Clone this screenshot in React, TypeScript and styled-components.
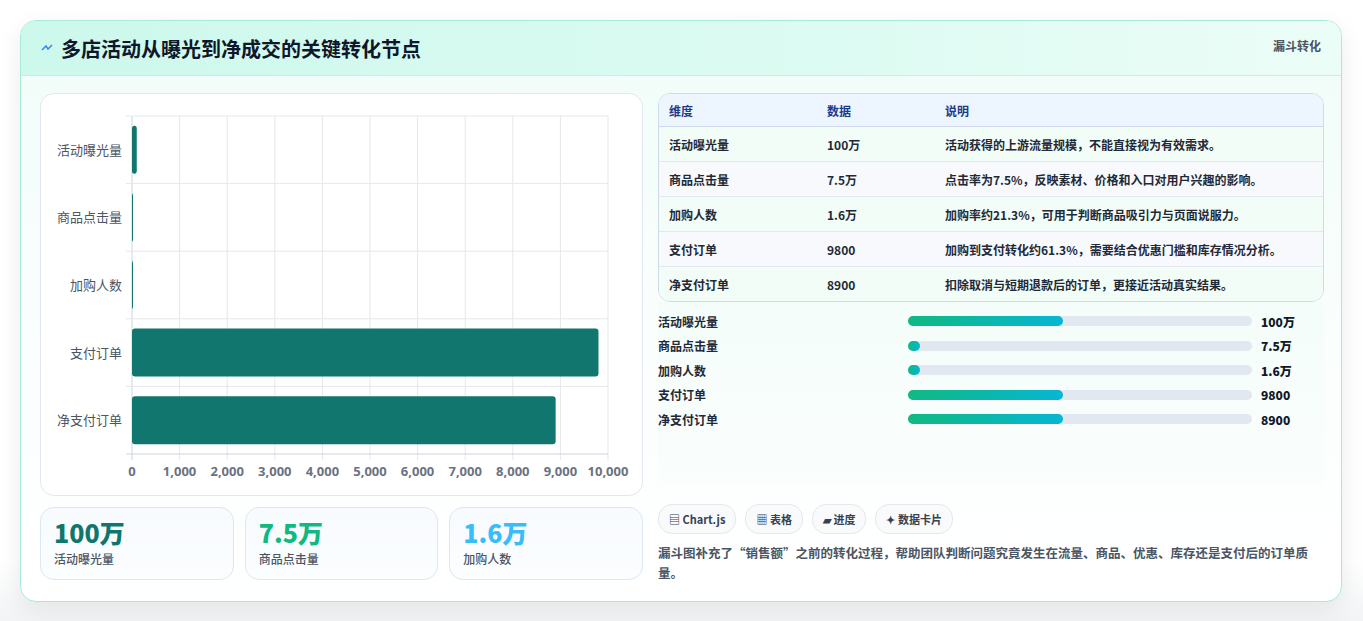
import React from "react";
import styled, { createGlobalStyle } from "styled-components";

const Global = createGlobalStyle`
  html, body { margin: 0; padding: 0; background: #fff; }
  body { font-family: "Noto Sans CJK SC", "Noto Sans", sans-serif; color: #1f2937; }
`;

const Page = styled.div`
  padding: 20px 21px 22px 20px;
  background: linear-gradient(180deg, #fff 0%, #fff 90%, #f1f3f4 100%);
`;
const Card = styled.div`
  border: 1px solid #a7eadc;
  border-radius: 16px;
  overflow: hidden;
  background: linear-gradient(180deg, #f0fdf8 0%, #fbfefd 60%, #fff 100%);
  box-shadow: 0 8px 24px rgba(15, 23, 42, 0.08);
`;
const Header = styled.div`
  height: 54px;
  display: flex;
  justify-content: space-between;
  padding: 0 20px;
  background: linear-gradient(90deg, #cdf8ec 0%, #dcfbf2 60%, #ecfdf7 100%);
  border-bottom: 1px solid #c9efe4;
`;
const Title = styled.h1`
  margin: 0;
  display: flex;
  align-items: center;
  gap: 8px;
  font-size: 20px;
  font-weight: 700;
  color: #0f172a;
`;
const Badge = styled.span`
  font-size: 12px;
  font-weight: 700;
  color: #4b5563;
  margin-top: 16px;
`;
const Body = styled.div`
  display: grid;
  grid-template-columns: 603px 666px;
  gap: 15px;
  padding: 17px 19px 18px 19px;
`;
const Col = styled.div`
  display: flex;
  flex-direction: column;
`;
const ChartBox = styled.div`
  height: 403px;
  background: #fff;
  border: 1px solid #e2e8f0;
  border-radius: 14px;
  box-sizing: border-box;
`;
const Kpis = styled.div`
  display: grid;
  grid-template-columns: repeat(3, 1fr);
  gap: 11px;
  margin-top: 11px;
`;
const Kpi = styled.div`
  height: 73px;
  box-sizing: border-box;
  border: 1px solid #dbe7f3;
  border-radius: 14px;
  background: linear-gradient(180deg, #f8fbfe, #fbfdff);
  padding: 9px 13px;
`;
const KpiVal = styled.div<{ $c: string }>`
  font-size: 25px;
  font-weight: 800;
  line-height: 30px;
  color: ${(p) => p.$c};
  font-family: "Noto Sans CJK SC", sans-serif;
`;
const KpiLabel = styled.div`
  font-size: 12px;
  color: #4b5563;
  font-weight: 500;
  margin-top: 3px;
`;
const Table = styled.table`
  width: 100%;
  border-collapse: separate;
  border-spacing: 0;
  border: 1px solid #cfdbea;
  border-radius: 12px;
  overflow: hidden;
  font-size: 12px;
  background: #fff;
`;
const Th = styled.th`
  text-align: left;
  height: 32px;
  padding: 0 10px;
  background: #edf5ff;
  color: #1e3a8a;
  font-weight: 700;
  border-bottom: 1px solid #cfdbea;
`;
const Tr = styled.tr<{ $alt: boolean }>`
  background: ${(p) => (p.$alt ? "#f7f9fc" : "#f2fdf8")};
`;
const Td = styled.td<{ $last: boolean }>`
  height: 34px;
  padding: 0 10px;
  color: #1f2937;
  font-weight: 600;
  border-bottom: ${(p) => (p.$last ? "none" : "1px solid #e2e8f0")};
`;
const Progress = styled.div`
  display: flex;
  flex-direction: column;
  gap: 6px;
  padding: 10px 0 28px;
  height: 184px;
  box-sizing: border-box;
  background: linear-gradient(180deg, #f4fdf9, #fafefd);
`;
const PRow = styled.div`
  display: grid;
  grid-template-columns: 241px 344px 1fr;
  gap: 9px;
  align-items: center;
  height: 18.5px;
  font-size: 12px;
  font-weight: 600;
`;
const Track = styled.div`
  height: 10px;
  border-radius: 5px;
  background: #e2e8f0;
`;
const Fill = styled.div`
  height: 100%;
  border-radius: 5px;
  background: linear-gradient(90deg, #10b981, #06b6d4);
`;
const PVal = styled.span`
  font-weight: 800;
  color: #111827;
`;
const Tags = styled.div`
  display: flex;
  gap: 9px;
  margin-top: 18px;
`;
const Tag = styled.span`
  height: 28px;
  padding: 0 10px;
  display: inline-flex;
  align-items: center;
  gap: 4px;
  border: 1px solid #e5e7eb;
  border-radius: 14px;
  background: #f9fafb;
  font-size: 11px;
  font-weight: 700;
  color: #374151;
`;
const Desc = styled.p`
  margin: 9px 0 0;
  font-size: 12.5px;
  line-height: 20px;
  color: #4b5563;
  font-weight: 600;
`;

const labels = ["活动曝光量", "商品点击量", "加购人数", "支付订单", "净支付订单"];
const vals = [100, 7.5, 1.6, 9800, 8900];

function Chart() {
  const x0 = 91, x1 = 567, y0 = 22, y1 = 360;
  const band = (y1 - y0) / 5;
  return (
    <svg width="601" height="401" style={{ display: "block" }}>
      {Array.from({ length: 11 }).map((_, i) => {
        const x = x0 + ((x1 - x0) * i) / 10;
        return (
          <g key={i}>
            <line x1={x} x2={x} y1={y0} y2={y1 + 6} stroke={i === 0 ? "#cbd5e1" : "#e5e7eb"} />
            <text x={x} y={y1 + 22} textAnchor="middle" fontSize="13" fontWeight="700" fill="#6b7280" fontFamily="Noto Sans, sans-serif">
              {i === 0 ? "0" : (i * 1000).toLocaleString("en-US")}
            </text>
          </g>
        );
      })}
      {Array.from({ length: 6 }).map((_, i) => (
        <line key={i} x1={x0 - 6} x2={x1} y1={y0 + band * i} y2={y0 + band * i} stroke={i === 5 ? "#cbd5e1" : "#e5e7eb"} />
      ))}
      {labels.map((l, i) => {
        const cy = y0 + band * i + band / 2;
        const w = Math.max(((x1 - x0) * vals[i]) / 10000, 1);
        return (
          <g key={l}>
            <text x={x0 - 10} y={cy + 5} textAnchor="end" fontSize="13" fill="#4b5563" fontFamily="Noto Sans CJK SC, sans-serif">{l}</text>
            <rect x={x0} y={cy - 24} width={w} height={48} rx="3" fill="#10766e" />
          </g>
        );
      })}
    </svg>
  );
}

export default function App() {
  const rows = [
    ["活动曝光量", "100万", "活动获得的上游流量规模，不能直接视为有效需求。"],
    ["商品点击量", "7.5万", "点击率为7.5%，反映素材、价格和入口对用户兴趣的影响。"],
    ["加购人数", "1.6万", "加购率约21.3%，可用于判断商品吸引力与页面说服力。"],
    ["支付订单", "9800", "加购到支付转化约61.3%，需要结合优惠门槛和库存情况分析。"],
    ["净支付订单", "8900", "扣除取消与短期退款后的订单，更接近活动真实结果。"],
  ];
  const prog = [45, 3.5, 3.5, 45, 45];
  return (
    <Page>
      <Global />
      <Card>
        <Header>
          <Title>
            <svg width="12" height="12" viewBox="0 0 12 12"><path d="M1 8 L5 4 L7 7 L11 3" stroke="#3b82f6" strokeWidth="1.5" fill="none" /></svg>
            多店活动从曝光到净成交的关键转化节点
          </Title>
          <Badge>漏斗转化</Badge>
        </Header>
        <Body>
          <Col>
            <ChartBox><Chart /></ChartBox>
            <Kpis>
              <Kpi><KpiVal $c="#0f766e">100万</KpiVal><KpiLabel>活动曝光量</KpiLabel></Kpi>
              <Kpi><KpiVal $c="#10b981">7.5万</KpiVal><KpiLabel>商品点击量</KpiLabel></Kpi>
              <Kpi><KpiVal $c="#38bdf8">1.6万</KpiVal><KpiLabel>加购人数</KpiLabel></Kpi>
            </Kpis>
          </Col>
          <Col>
            <Table>
              <thead>
                <tr><Th style={{ width: 138 }}>维度</Th><Th style={{ width: 98 }}>数据</Th><Th>说明</Th></tr>
              </thead>
              <tbody>
                {rows.map((r, i) => (
                  <Tr key={i} $alt={i % 2 === 1}>
                    {r.map((c, j) => <Td key={j} $last={i === rows.length - 1}>{c}</Td>)}
                  </Tr>
                ))}
              </tbody>
            </Table>
            <Progress>
              {rows.map((r, i) => (
                <PRow key={i}>
                  <span>{r[0]}</span>
                  <Track><Fill style={{ width: `${prog[i]}%` }} /></Track>
                  <PVal>{r[1]}</PVal>
                </PRow>
              ))}
            </Progress>
            <Tags>
              <Tag>▤ Chart.js</Tag>
              <Tag>▦ 表格</Tag>
              <Tag>▰ 进度</Tag>
              <Tag>✦ 数据卡片</Tag>
            </Tags>
            <Desc>漏斗图补充了“销售额”之前的转化过程，帮助团队判断问题究竟发生在流量、商品、优惠、库存还是支付后的订单质量。</Desc>
          </Col>
        </Body>
      </Card>
    </Page>
  );
}
